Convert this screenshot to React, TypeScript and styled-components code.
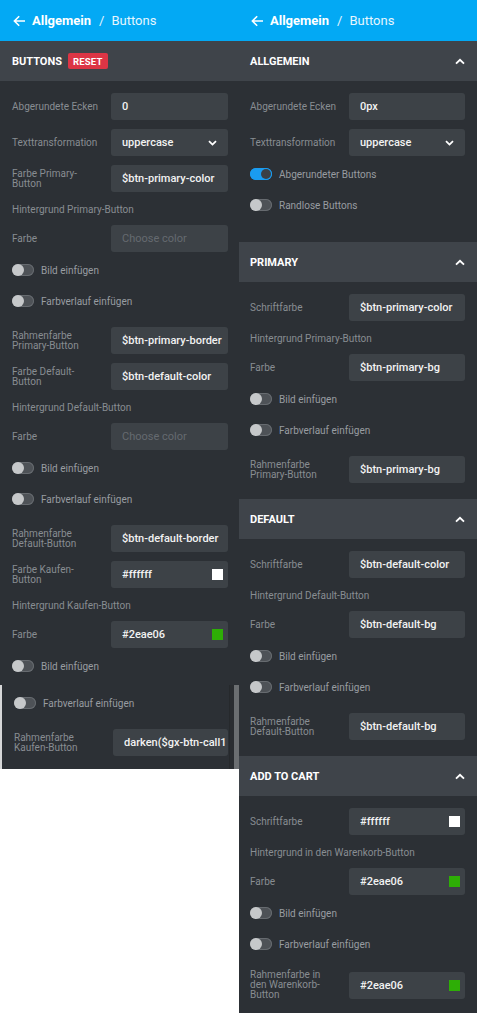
import React from "react";
import styled, { createGlobalStyle } from "styled-components";

const Global = createGlobalStyle`
  html, body { margin: 0; padding: 0; background: #ffffff; }
  body { font-family: Roboto, "Noto Sans", "Liberation Sans", sans-serif; }
  * { box-sizing: border-box; }
`;

const Canvas = styled.div`
  display: flex;
  align-items: flex-start;
  width: 488px;
  min-height: 1024px;
  background: #ffffff;
`;

const Panel = styled.div<{ $w: number }>`
  width: ${(p) => p.$w}px;
  flex: none;
  display: flex;
  flex-direction: column;
  background: #2c3035;
`;

const TopBar = styled.div<{ $pl: number }>`
  height: 41px;
  background: #03a9f4;
  display: flex;
  align-items: center;
  padding-left: ${(p) => p.$pl}px;
  color: #ffffff;
  font-size: 13px;
`;

const Crumb = styled.span<{ $strong?: boolean }>`
  font-weight: ${(p) => (p.$strong ? 700 : 400)};
  color: ${(p) => (p.$strong ? "#ffffff" : "#e6f6fe")};
  margin-left: ${(p) => (p.$strong ? 6 : 0)}px;
`;

const CrumbSep = styled.span`
  color: #e6f6fe;
  margin: 0 7px 0 8px;
`;

const SectionHead = styled.div<{ $pl: number }>`
  height: 40px;
  background: #3f444a;
  display: flex;
  align-items: center;
  padding: 0 12px 0 ${(p) => p.$pl}px;
`;

const SectionTitle = styled.span`
  font-size: 11px;
  font-weight: 700;
  color: #ffffff;
  text-transform: uppercase;
`;

const Badge = styled.span`
  margin-left: 6px;
  height: 16px;
  padding: 0 5px;
  display: inline-flex;
  align-items: center;
  background: #dc3545;
  color: #ffffff;
  border-radius: 2px;
  font-size: 9.5px;
  font-weight: 700;
  letter-spacing: 0.2px;
`;

const HeadChevron = styled.svg`
  margin-left: auto;
`;

const Body = styled.div<{ $pl: number; $pr: number; $pb: number }>`
  display: flex;
  flex-direction: column;
  padding: 12px ${(p) => p.$pr}px ${(p) => p.$pb}px ${(p) => p.$pl}px;
`;

const Sub = styled.div`
  margin-top: 9px;
  height: 16px;
  display: flex;
  align-items: center;
  font-size: 10px;
  color: #888d92;
  white-space: nowrap;
`;

const ToggleRow = styled.div`
  margin-top: 10px;
  height: 16px;
  display: flex;
  align-items: center;
  gap: 7px;
  font-size: 10px;
  color: #989ca1;
  & + & {
    margin-top: 15px;
  }
  &:first-child {
    margin-top: 0;
  }
`;

const Switch = styled.span<{ $on?: boolean }>`
  position: relative;
  width: 22px;
  height: 12px;
  flex: none;
  border-radius: 6px;
  background: ${(p) => (p.$on ? "#1a9cf0" : "#4e5257")};
  box-shadow: inset 0 0 0 1px ${(p) => (p.$on ? "#1a9cf0" : "#676b70")};
  &::after {
    content: "";
    position: absolute;
    top: ${(p) => (p.$on ? 1 : 0)}px;
    left: ${(p) => (p.$on ? 11 : 0)}px;
    width: ${(p) => (p.$on ? 10 : 12)}px;
    height: ${(p) => (p.$on ? 10 : 12)}px;
    border-radius: 50%;
    background: ${(p) => (p.$on ? "#3b4046" : "#c6c8ca")};
  }
`;

const Field = styled.div`
  margin-top: 9px;
  display: grid;
  grid-template-columns: 99px 1fr;
  align-items: center;
  min-height: 27px;
  ${Sub} + & {
    margin-top: 8px;
  }
  ${ToggleRow} + & {
    margin-top: 18px;
  }
  &:first-child {
    margin-top: 0;
  }
`;

const FieldLabel = styled.div`
  font-size: 10px;
  line-height: 10px;
  color: #888d92;
  padding-right: 11px;
`;

const ValueBox = styled.div<{ $muted?: boolean }>`
  height: 27px;
  border-radius: 3px;
  background: #3d4247;
  display: flex;
  align-items: center;
  padding: 0 2px 0 11px;
  overflow: hidden;
  white-space: nowrap;
  font-size: 11px;
  font-weight: ${(p) => (p.$muted ? 400 : 500)};
  color: ${(p) => (p.$muted ? "#656a70" : "#f2f2f2")};
`;

const ValueText = styled.span`
  flex: 1;
  overflow: hidden;
`;

const Swatch = styled.span<{ $color: string }>`
  width: 11px;
  height: 11px;
  flex: none;
  margin-right: 3px;
  background: ${(p) => p.$color};
`;

const SelectChevron = styled.svg`
  flex: none;
  margin-right: 9px;
`;

const Continued = styled.div`
  position: relative;
  border-left: 2px solid #d6d7d8;
  padding: 10px 11px 13px 12px;
  display: flex;
  flex-direction: column;
`;

const ScrollTrack = styled.div`
  position: absolute;
  top: 0;
  bottom: 0;
  right: 0;
  width: 10px;
  background: #2a2d31;
  border-left: 1px solid #26292c;
  &::after {
    content: "";
    position: absolute;
    top: 0;
    bottom: 0;
    right: 0;
    width: 5px;
    background: #6b6e71;
  }
`;

const BackArrow = () => (
  <svg width="13" height="12" viewBox="0 0 13 12" fill="none">
    <path d="M12 6H1.6M6.2 1.2 1.4 6l4.8 4.8" stroke="#fff" strokeWidth="1.6" />
  </svg>
);

const UpChevron = () => (
  <HeadChevron width="10" height="7" viewBox="0 0 10 7" fill="none">
    <path d="M1 5.6 5 1.8l4 3.8" stroke="#fff" strokeWidth="1.9" />
  </HeadChevron>
);

type Item =
  | { kind: "field"; label: string; value: string; muted?: boolean; swatch?: string; select?: boolean }
  | { kind: "sub"; text: string }
  | { kind: "toggle"; text: string; on?: boolean };

const Row = ({ item }: { item: Item }) => {
  if (item.kind === "sub") return <Sub>{item.text}</Sub>;
  if (item.kind === "toggle")
    return (
      <ToggleRow>
        <Switch $on={item.on} />
        {item.text}
      </ToggleRow>
    );
  return (
    <Field>
      <FieldLabel>{item.label}</FieldLabel>
      <ValueBox $muted={item.muted}>
        <ValueText>{item.value}</ValueText>
        {item.swatch && <Swatch $color={item.swatch} />}
        {item.select && (
          <SelectChevron width="9" height="6" viewBox="0 0 9 6" fill="none">
            <path d="M1 1.2 4.5 4.6 8 1.2" stroke="#fff" strokeWidth="1.8" />
          </SelectChevron>
        )}
      </ValueBox>
    </Field>
  );
};

const TopNav = ({ pl }: { pl: number }) => (
  <TopBar $pl={pl}>
    <BackArrow />
    <Crumb $strong>Allgemein</Crumb>
    <CrumbSep>/</CrumbSep>
    <Crumb>Buttons</Crumb>
  </TopBar>
);

const f = (label: string, value: string, extra: Partial<{ muted: boolean; swatch: string; select: boolean }> = {}): Item => ({
  kind: "field",
  label,
  value,
  ...extra,
});
const s = (text: string): Item => ({ kind: "sub", text });
const t = (text: string, on = false): Item => ({ kind: "toggle", text, on });

const leftItems: Item[] = [
  f("Abgerundete Ecken", "0"),
  f("Texttransformation", "uppercase", { select: true }),
  f("Farbe Primary-Button", "$btn-primary-color"),
  s("Hintergrund Primary-Button"),
  f("Farbe", "Choose color", { muted: true }),
  t("Bild einfügen"),
  t("Farbverlauf einfügen"),
  f("Rahmenfarbe Primary-Button", "$btn-primary-border"),
  f("Farbe Default-Button", "$btn-default-color"),
  s("Hintergrund Default-Button"),
  f("Farbe", "Choose color", { muted: true }),
  t("Bild einfügen"),
  t("Farbverlauf einfügen"),
  f("Rahmenfarbe Default-Button", "$btn-default-border"),
  f("Farbe Kaufen-Button", "#ffffff", { swatch: "#ffffff" }),
  s("Hintergrund Kaufen-Button"),
  f("Farbe", "#2eae06", { swatch: "#2eae06" }),
  t("Bild einfügen"),
];

const leftContinued: Item[] = [
  t("Farbverlauf einfügen"),
  f("Rahmenfarbe Kaufen-Button", "darken($gx-btn-call1"),
];

const sections: { title: string; pb: number; items: Item[] }[] = [
  {
    title: "Allgemein",
    pb: 29,
    items: [
      f("Abgerundete Ecken", "0px"),
      f("Texttransformation", "uppercase", { select: true }),
      t("Abgerundeter Buttons", true),
      t("Randlose Buttons"),
    ],
  },
  {
    title: "Primary",
    pb: 16,
    items: [
      f("Schriftfarbe", "$btn-primary-color"),
      s("Hintergrund Primary-Button"),
      f("Farbe", "$btn-primary-bg"),
      t("Bild einfügen"),
      t("Farbverlauf einfügen"),
      f("Rahmenfarbe Primary-Button", "$btn-primary-bg"),
    ],
  },
  {
    title: "Default",
    pb: 16,
    items: [
      f("Schriftfarbe", "$btn-default-color"),
      s("Hintergrund Default-Button"),
      f("Farbe", "$btn-default-bg"),
      t("Bild einfügen"),
      t("Farbverlauf einfügen"),
      f("Rahmenfarbe Default-Button", "$btn-default-bg"),
    ],
  },
  {
    title: "Add to cart",
    pb: 13,
    items: [
      f("Schriftfarbe", "#ffffff", { swatch: "#ffffff" }),
      s("Hintergrund in den Warenkorb-Button"),
      f("Farbe", "#2eae06", { swatch: "#2eae06" }),
      t("Bild einfügen"),
      t("Farbverlauf einfügen"),
      f("Rahmenfarbe in den Warenkorb-Button", "#2eae06", { swatch: "#2eae06" }),
    ],
  },
];

export default function App() {
  return (
    <>
      <Global />
      <Canvas>
        <Panel $w={239}>
          <TopNav pl={13} />
          <SectionHead $pl={12}>
            <SectionTitle>Buttons</SectionTitle>
            <Badge>RESET</Badge>
          </SectionHead>
          <Body $pl={12} $pr={11} $pb={11}>
            {leftItems.map((it, i) => (
              <Row key={i} item={it} />
            ))}
          </Body>
          <Continued>
            {leftContinued.map((it, i) => (
              <Row key={i} item={it} />
            ))}
            <ScrollTrack />
          </Continued>
        </Panel>
        <Panel $w={238}>
          <TopNav pl={12} />
          {sections.map((sec) => (
            <React.Fragment key={sec.title}>
              <SectionHead $pl={11}>
                <SectionTitle>{sec.title}</SectionTitle>
                <UpChevron />
              </SectionHead>
              <Body $pl={11} $pr={12} $pb={sec.pb}>
                {sec.items.map((it, i) => (
                  <Row key={i} item={it} />
                ))}
              </Body>
            </React.Fragment>
          ))}
        </Panel>
      </Canvas>
    </>
  );
}
